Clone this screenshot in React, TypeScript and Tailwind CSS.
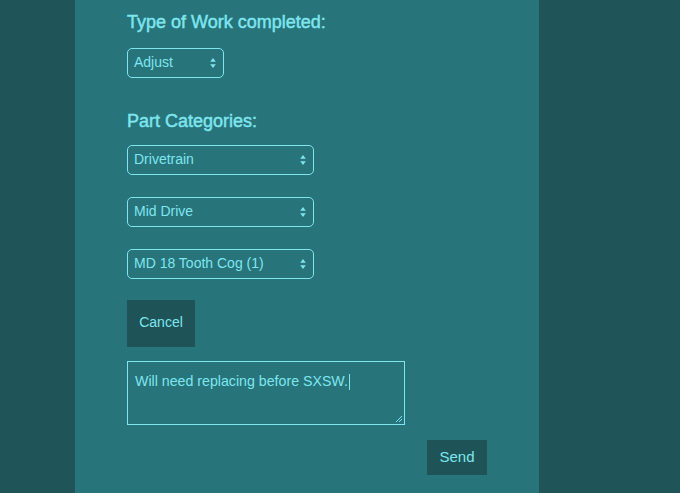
import React from "react";

const Arrows = () => (
  <svg width="6" height="11" viewBox="0 0 6 11" className="absolute right-[7px] top-1/2 -translate-y-1/2">
    <path d="M3 0.5 L5.8 4.2 L0.2 4.2 Z" fill="#7fe6ee" />
    <path d="M3 10.5 L5.8 6.8 L0.2 6.8 Z" fill="#7fe6ee" />
  </svg>
);

const Select = ({ label, w }: { label: string; w: string }) => (
  <div className={`relative ${w} h-[30px] border border-[#7fe6ee] rounded-[5px] flex items-center pl-[6px] text-[14px] pb-[2px]`}>
    <span>{label}</span>
    <Arrows />
  </div>
);

export default function App() {
  return (
    <div
      className="w-[680px] h-[493px] bg-[#1f5559] flex overflow-hidden text-[#7fe6ee]"
      style={{ fontFamily: '"Liberation Sans", Arial, sans-serif' }}
    >
      <div className="ml-[75px] w-[464px] h-full bg-[#27747b] pl-[52px] pt-[11px] flex flex-col">
        <div className="text-[18px] leading-[22px] [-webkit-text-stroke:0.45px_#7fe6ee]">Type of Work completed:</div>
        <div className="mt-[15px]">
          <Select label="Adjust" w="w-[97px]" />
        </div>
        <div className="mt-[32px] text-[18px] leading-[22px] [-webkit-text-stroke:0.45px_#7fe6ee]">Part Categories:</div>
        <div className="mt-[13px]">
          <Select label="Drivetrain" w="w-[187px]" />
        </div>
        <div className="mt-[22px]">
          <Select label="Mid Drive" w="w-[187px]" />
        </div>
        <div className="mt-[22px]">
          <Select label="MD 18 Tooth Cog (1)" w="w-[187px]" />
        </div>
        <div className="mt-[21px]">
          <div className="w-[68px] h-[47px] bg-[#1e5357] flex items-center justify-center text-[14px] pb-[2px]">Cancel</div>
        </div>
        <div className="mt-[14px] relative w-[278px] h-[64px] border border-[#7fe6ee] pl-[7px] pt-[9px] text-[14.2px]">
          <span>Will need replacing before SXSW.</span>
          <span className="inline-block w-[1px] h-[16px] bg-[#7fe6ee] align-middle ml-[1px]" />
          <svg width="8" height="8" viewBox="0 0 8 8" className="absolute right-[1px] bottom-[1px]">
            <path d="M7 1 L1 7 M7 4 L4 7" stroke="#7fe6ee" strokeWidth="1" />
          </svg>
        </div>
        <div className="mt-[15px] ml-[300px] w-[60px] h-[35px] bg-[#1e5357] flex items-center justify-center text-[15px]">Send</div>
      </div>
    </div>
  );
}
